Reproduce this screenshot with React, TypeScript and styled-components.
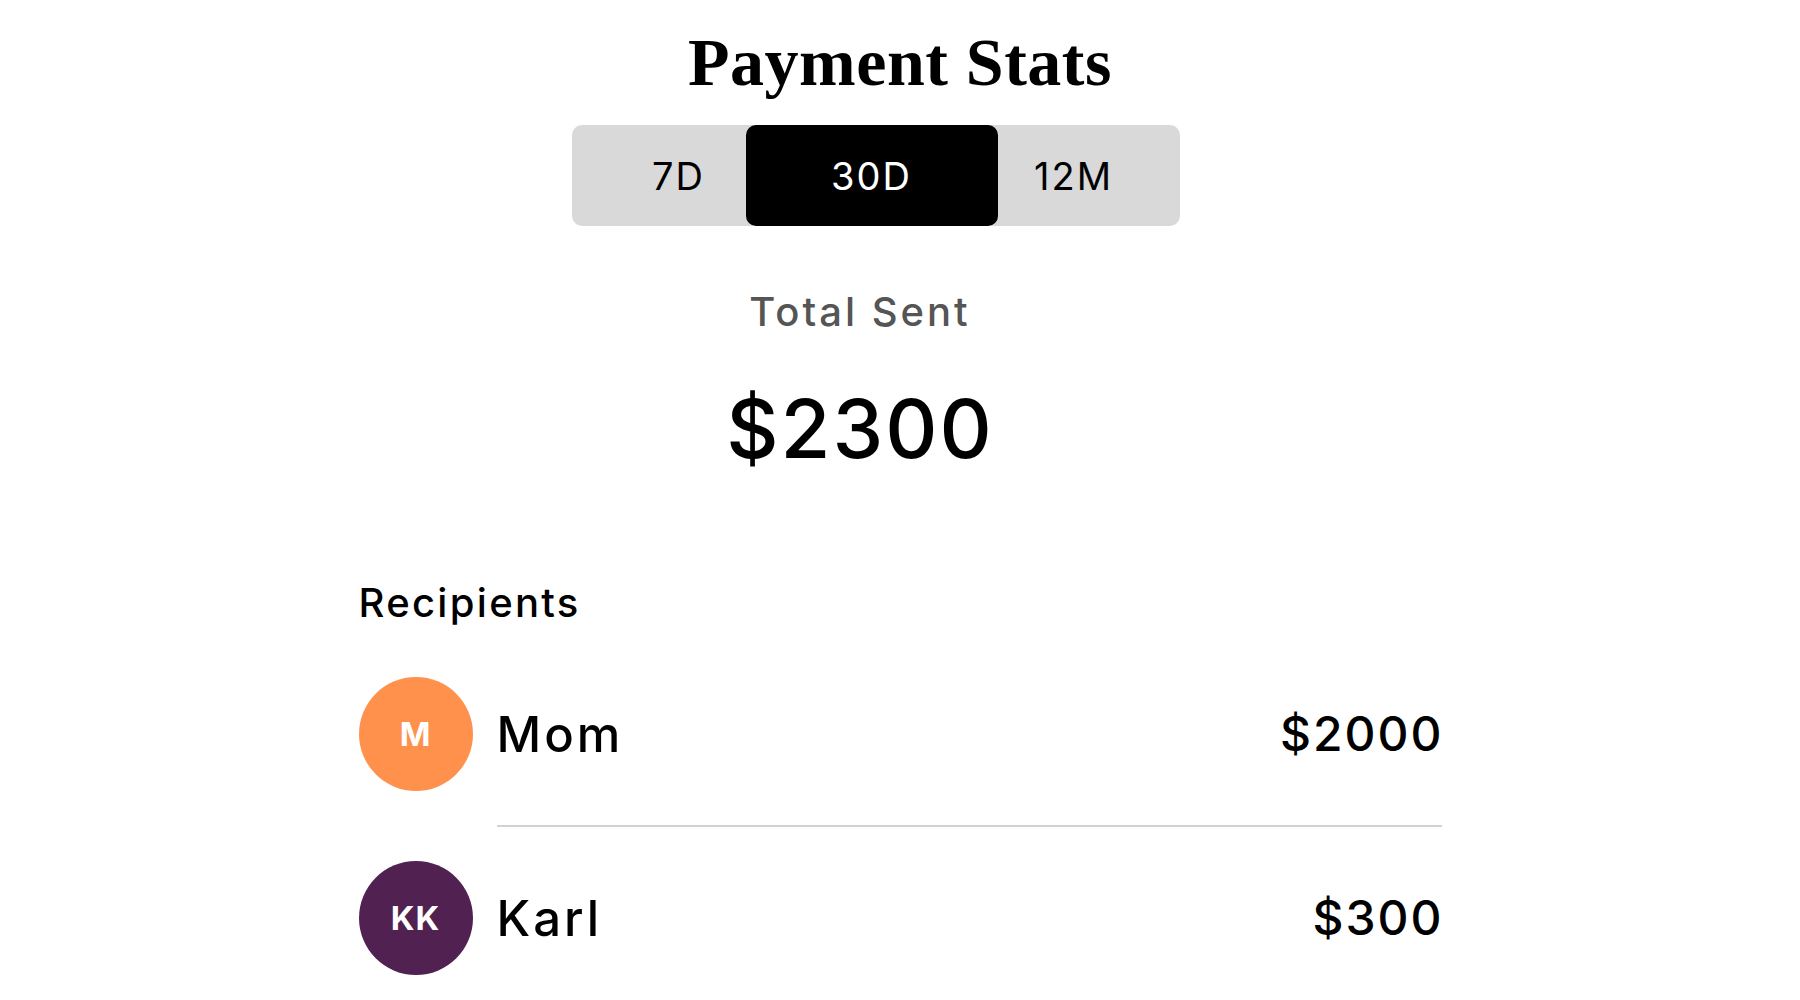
import React from 'react'
import styled, { createGlobalStyle } from 'styled-components'

const GlobalStyle = createGlobalStyle`
    html, body {
        margin: 0;
        padding: 0;
        background: #ffffff;
    }
    body {
        font-family: Inter, "Noto Sans", "DejaVu Sans", sans-serif;
        color: #000;
    }
`

const periods = [
    { label: '7D', width: 174, left: 40, right: 0 },
    { label: '30D', width: 252, left: 0, right: 0 },
    { label: '12M', width: 182, left: 0, right: 30 },
]

const recipients = [
    { initials: 'M', name: 'Mom', amount: '$2000', color: '#ff914d' },
    { initials: 'KK', name: 'Karl', amount: '$300', color: '#512151' },
]

const App = () => {
    const active = '30D'
    return (
        <>
            <GlobalStyle />
            <Page>
                <Title>Payment Stats</Title>
                <Segmented>
                    {periods.map((p) => (
                        <Tab
                            key={p.label}
                            $active={p.label === active}
                            $width={p.width}
                            $padLeft={p.left}
                            $padRight={p.right}
                        >
                            {p.label}
                        </Tab>
                    ))}
                </Segmented>
                <Summary>
                    <SummaryLabel>Total Sent</SummaryLabel>
                    <SummaryValue>$2300</SummaryValue>
                </Summary>
                <SectionTitle>Recipients</SectionTitle>
                <List>
                    {recipients.map((r, i) => (
                        <React.Fragment key={r.name}>
                            {i > 0 && <Divider />}
                            <Row>
                                <Avatar $bg={r.color}>{r.initials}</Avatar>
                                <RowBody>
                                    <Name>{r.name}</Name>
                                    <Amount>{r.amount}</Amount>
                                </RowBody>
                            </Row>
                        </React.Fragment>
                    ))}
                </List>
            </Page>
        </>
    )
}

export default App

const Page = styled.main`
    width: 1083px;
    margin: 0 auto;
    padding-top: 28px;
    display: flex;
    flex-direction: column;
`

const Title = styled.h1`
    margin: 0;
    font-family: "Liberation Serif", "DejaVu Serif", serif;
    font-weight: 700;
    font-size: 68px;
    line-height: 68px;
    letter-spacing: 0.5px;
    text-align: center;
`

const Segmented = styled.div`
    margin: 29px 0 0 213px;
    width: 608px;
    height: 101px;
    display: flex;
    background: #d9d9d9;
    border-radius: 10px;
`

const Tab = styled.button<{ $active: boolean; $width: number; $padLeft: number; $padRight: number }>`
    width: ${(p) => p.$width}px;
    height: 100%;
    padding: 0 ${(p) => p.$padRight}px 0 ${(p) => p.$padLeft}px;
    border: none;
    border-radius: 10px;
    display: flex;
    align-items: center;
    justify-content: center;
    font-family: Inter, "Noto Sans", sans-serif;
    font-size: 38px;
    line-height: 1;
    font-weight: 400;
    letter-spacing: 2px;
    background: ${(p) => (p.$active ? '#000' : 'transparent')};
    color: ${(p) => (p.$active ? '#fff' : '#000')};
    cursor: pointer;
`

const Summary = styled.section`
    margin-top: 66px;
    padding-right: 80px;
    display: flex;
    flex-direction: column;
    align-items: center;
`

const SummaryLabel = styled.div`
    font-size: 40px;
    line-height: 1;
    font-weight: 500;
    letter-spacing: 3px;
    color: #555555;
`

const SummaryValue = styled.div`
    margin-top: 57px;
    font-size: 81px;
    line-height: 1;
    font-weight: 500;
    letter-spacing: 2px;
`

const SectionTitle = styled.h2`
    margin: 113px 0 0 0;
    font-size: 40px;
    line-height: 1;
    font-weight: 500;
    letter-spacing: 2.3px;
`

const List = styled.div`
    margin-top: 54px;
    display: flex;
    flex-direction: column;
`

const Row = styled.div`
    display: flex;
    align-items: center;
    gap: 24px;
`

const Avatar = styled.div<{ $bg: string }>`
    width: 114px;
    height: 114px;
    flex-shrink: 0;
    border-radius: 50%;
    background: ${(p) => p.$bg};
    color: #fff;
    display: flex;
    align-items: center;
    justify-content: center;
    font-size: 33px;
    font-weight: 700;
    letter-spacing: 1px;
`

const RowBody = styled.div`
    flex: 1;
    display: flex;
    align-items: center;
    justify-content: space-between;
`

const Name = styled.span`
    font-size: 49px;
    line-height: 1;
    font-weight: 500;
    letter-spacing: 3px;
`

const Amount = styled.span`
    font-size: 48px;
    line-height: 1;
    font-weight: 500;
    letter-spacing: 2px;
    margin-right: -2px;
`

const Divider = styled.hr`
    margin: 34px 0 34px 138px;
    border: none;
    height: 2px;
    background: #d2d2d2;
`
